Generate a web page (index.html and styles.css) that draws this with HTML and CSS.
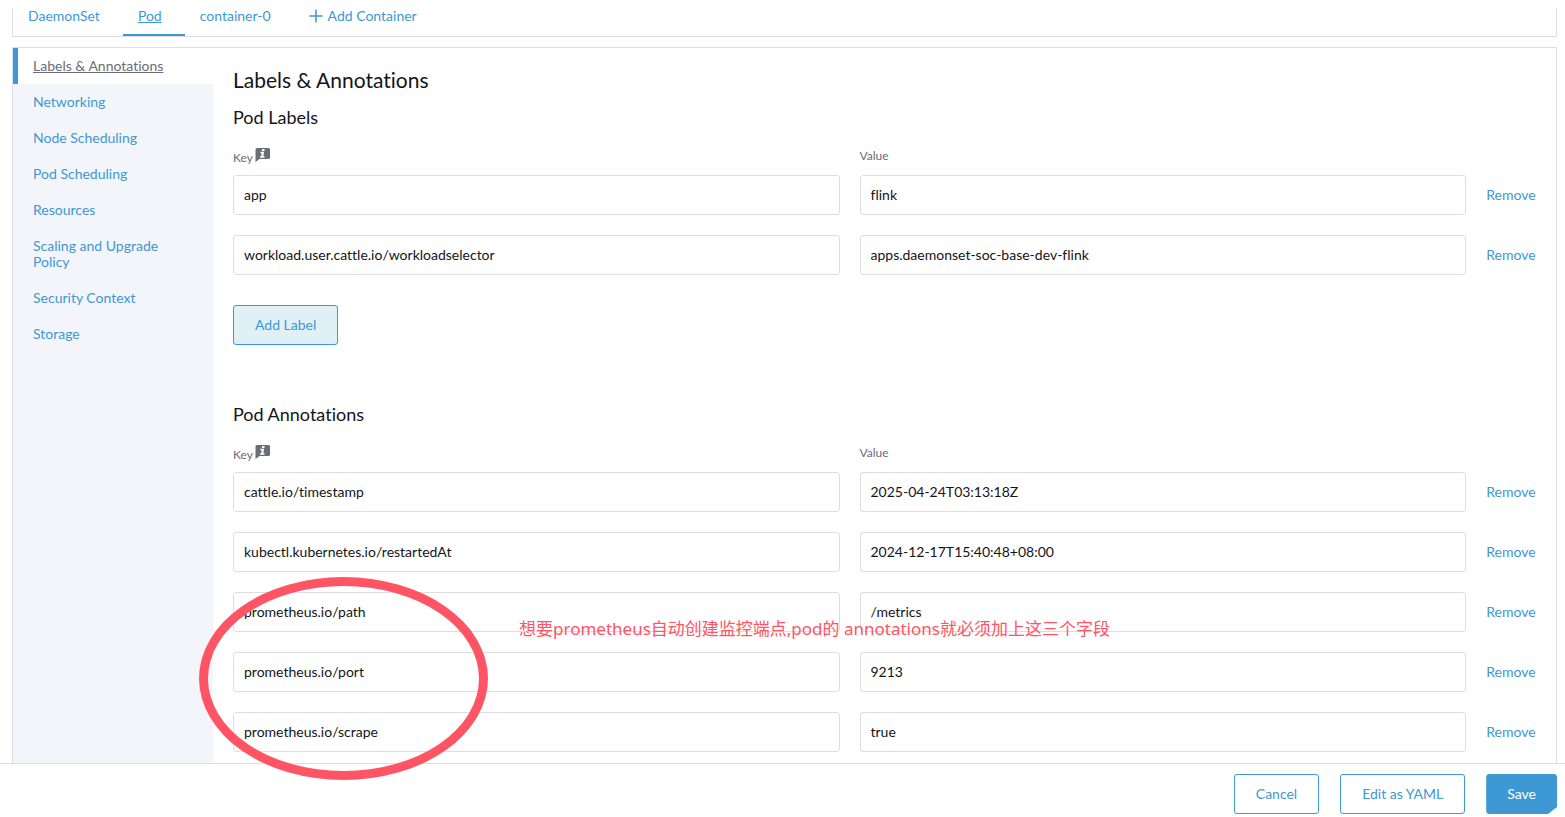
FILE: index.html
```
<!DOCTYPE html>
<html lang="en">
<head>
  <meta charset="UTF-8">
  <meta name="viewport" content="width=device-width, initial-scale=1">
  <title>DaemonSet: flink</title>
  <link rel="stylesheet" href="styles.css">
</head>

<body>

  <nav class="tabs">
    <a class="tab" href="#daemonset">DaemonSet</a>
    <a class="tab active" href="#pod">Pod</a>
    <a class="tab" href="#container-0">container-0</a>
    <button class="tab tab-add" type="button">
      <svg class="plus-icon" viewBox="0 0 14 14" aria-hidden="true"><path d="M7 .5v13M.5 7h13"/></svg>
      Add Container
    </button>
  </nav>

  <main class="panel">
    <nav class="side-tabs">
      <a class="active" href="#labels">Labels &amp; Annotations</a>
      <a href="#networking">Networking</a>
      <a href="#nodeScheduling">Node Scheduling</a>
      <a href="#podScheduling">Pod Scheduling</a>
      <a href="#resources">Resources</a>
      <a href="#upgrading">Scaling and Upgrade Policy</a>
      <a href="#securityContext">Security Context</a>
      <a href="#storage">Storage</a>
    </nav>

    <div class="content">
      <h2>Labels &amp; Annotations</h2>

      <section class="key-value">
        <h3>Pod Labels</h3>
        <div class="kv-row kv-head">
          <span class="key-head"><span id="labelKey">Key</span>
            <svg class="info-icon" viewBox="0 0 15 14" aria-hidden="true"><path class="bubble" d="M2 0h11.500a1.500 1.500 0 0 1 1.500 1.500v8a1.500 1.500 0 0 1-1.500 1.500H4.500L.5 14V1.500A1.500 1.500 0 0 1 2 0z"/><path class="letter" d="M7.200 1h2.300v2H6.800zM5.500 3.800h3.600L8.300 8.200h1.200v1.600H5V8.200h1.200l.5-2.900H5.300z"/></svg>
          </span>
          <span id="labelValue">Value</span>
        </div>
        <div class="kv-row">
          <input type="text" aria-labelledby="labelKey" value="app">
          <input type="text" aria-labelledby="labelValue" value="flink">
          <button class="remove" type="button">Remove</button>
        </div>
        <div class="kv-row">
          <input type="text" aria-labelledby="labelKey" value="workload.user.cattle.io/workloadselector">
          <input type="text" aria-labelledby="labelValue" value="apps.daemonset-soc-base-dev-flink">
          <button class="remove" type="button">Remove</button>
        </div>
        <button class="btn btn-add" type="button">Add Label</button>
      </section>

      <section class="key-value">
        <h3>Pod Annotations</h3>
        <div class="kv-row kv-head">
          <span class="key-head"><span id="annotationKey">Key</span>
            <svg class="info-icon" viewBox="0 0 15 14" aria-hidden="true"><path class="bubble" d="M2 0h11.500a1.500 1.500 0 0 1 1.500 1.500v8a1.500 1.500 0 0 1-1.500 1.500H4.500L.5 14V1.500A1.500 1.500 0 0 1 2 0z"/><path class="letter" d="M7.200 1h2.300v2H6.800zM5.500 3.800h3.600L8.300 8.200h1.200v1.600H5V8.200h1.200l.5-2.900H5.300z"/></svg>
          </span>
          <span id="annotationValue">Value</span>
        </div>
        <div class="kv-row">
          <input type="text" aria-labelledby="annotationKey" value="cattle.io/timestamp">
          <input type="text" aria-labelledby="annotationValue" value="2025-04-24T03:13:18Z">
          <button class="remove" type="button">Remove</button>
        </div>
        <div class="kv-row">
          <input type="text" aria-labelledby="annotationKey" value="kubectl.kubernetes.io/restartedAt">
          <input type="text" aria-labelledby="annotationValue" value="2024-12-17T15:40:48+08:00">
          <button class="remove" type="button">Remove</button>
        </div>
        <div class="kv-row">
          <input type="text" aria-labelledby="annotationKey" value="prometheus.io/path">
          <input type="text" aria-labelledby="annotationValue" value="/metrics">
          <button class="remove" type="button">Remove</button>
        </div>
        <div class="kv-row">
          <input type="text" aria-labelledby="annotationKey" value="prometheus.io/port">
          <input type="text" aria-labelledby="annotationValue" value="9213">
          <button class="remove" type="button">Remove</button>
        </div>
        <div class="kv-row">
          <input type="text" aria-labelledby="annotationKey" value="prometheus.io/scrape">
          <input type="text" aria-labelledby="annotationValue" value="true">
          <button class="remove" type="button">Remove</button>
        </div>
      </section>
    </div>
  </main>

  <footer class="footer">
    <button class="btn" type="button">Cancel</button>
    <button class="btn" type="button">Edit as YAML</button>
    <button class="btn btn-save" type="button">Save</button>
  </footer>

  <!-- hand-drawn note on top of the form -->
  <div class="note-circle"></div>
  <p class="note-text" lang="zh">想要prometheus自动创建监控端点,pod的 annotations就必须加上这三个字段</p>

</body>
</html>
```
FILE: styles.css
```
:root {
  --primary: #3d98d3;
  --border: #dcdee7;
  --text: #141419;
  --muted: #6c6c76;
  --side-bg: #f4f5fa;
  --note: #ff5464;
}

* { margin: 0; padding: 0; box-sizing: border-box; }

body {
  position: relative;
  display: flex;
  flex-direction: column;
  height: 100vh;
  padding-top: 8px;
  overflow: hidden;
  font-family: Lato, sans-serif;
  font-size: 14px;
  font-variant-ligatures: none;
  line-height: 16px;
  color: var(--text);
  background: white;
}

button, input {
  font: inherit;
  font-variant-ligatures: none;
}

button {
  cursor: pointer;
}

a {
  color: var(--primary);
  text-decoration: none;
}

/* top tabs */
.tabs {
  display: flex;
  flex-shrink: 0;
  margin: 0 8px 10px 12px;
  border: 1px solid var(--border);
  border-top: none;
}

.tab {
  padding: 0 23px 10px 15px;
  border: none;
  border-bottom: 2px solid transparent;
  background: none;
  color: var(--primary);
}

.tab.active {
  border-bottom-color: var(--primary);
  text-decoration: underline;
}

.tab-add {
  display: flex;
  align-items: center;
  gap: 5px;
}

.plus-icon {
  width: 14px;
  height: 14px;
  stroke: var(--primary);
  stroke-width: 1.5;
}

/* main panel */
.panel {
  display: flex;
  flex: 1;
  min-height: 0;
  margin: 0 8px 0 12px;
  border: 1px solid var(--border);
  border-bottom: none;
  overflow: hidden;
}

.side-tabs {
  flex: 0 0 200px;
  background: var(--side-bg);
}

.side-tabs a {
  display: block;
  padding: 10px 20px;
}

.side-tabs a.active {
  padding-left: 15px;
  border-left: 5px solid var(--primary);
  background: white;
  color: var(--muted);
  text-decoration: underline;
}

.content {
  flex: 1;
  padding: 19px 20px;
}

h2 {
  margin-bottom: 14px;
  font-size: 21px;
  font-weight: 400;
  line-height: 25px;
}

h3 {
  margin-bottom: 17px;
  font-size: 18px;
  font-weight: 400;
  line-height: 22px;
}

.key-value {
  margin-bottom: 58px;
}

.kv-row {
  display: grid;
  grid-template-columns: 1fr 1fr 50px;
  gap: 20px;
  margin-bottom: 20px;
}

.kv-head {
  height: 20px;
  margin-bottom: 10px;
  font-size: 12px;
  line-height: 22px;
  color: var(--muted);
}

.key-head {
  display: flex;
  align-items: flex-start;
  gap: 2px;
  line-height: 26px;
}

.info-icon {
  width: 15px;
  height: 14px;
  margin-top: 3px;
}

.bubble { fill: var(--muted); }
.letter { fill: white; }

.kv-row input {
  width: 100%;
  height: 40px;
  padding: 0 10px 2px;
  border: 1px solid var(--border);
  border-radius: 3px;
  background: white;
  color: var(--text);
}

.remove {
  border: none;
  background: none;
  color: var(--primary);
}

/* buttons */
.btn {
  height: 40px;
  padding: 0 21px;
  border: 1px solid var(--primary);
  border-radius: 3px;
  background: white;
  color: var(--primary);
}

.btn-add {
  margin-top: 10px;
  background: #e1f0f7;
}

.btn-save {
  padding: 0 20px;
  background: var(--primary);
  color: white;
  clip-path: polygon(0 0, 100% 0, 100% calc(100% - 7px), calc(100% - 9px) 100%, 0 100%);
}

.footer {
  display: flex;
  flex-shrink: 0;
  justify-content: flex-end;
  gap: 21px;
  padding: 10px 8px 3px;
  border-top: 1px solid var(--border);
}

/* note */
.note-circle {
  position: absolute;
  top: 577px;
  left: 199px;
  width: 289px;
  height: 203px;
  border: 9px solid var(--note);
  border-radius: 50%;
  pointer-events: none;
}

.note-text {
  position: absolute;
  top: 617px;
  left: 519px;
  font-family: "Noto Sans", "Noto Sans CJK SC", sans-serif;
  font-size: 17px;
  line-height: 24px;
  color: var(--note);
  white-space: nowrap;
}
```
